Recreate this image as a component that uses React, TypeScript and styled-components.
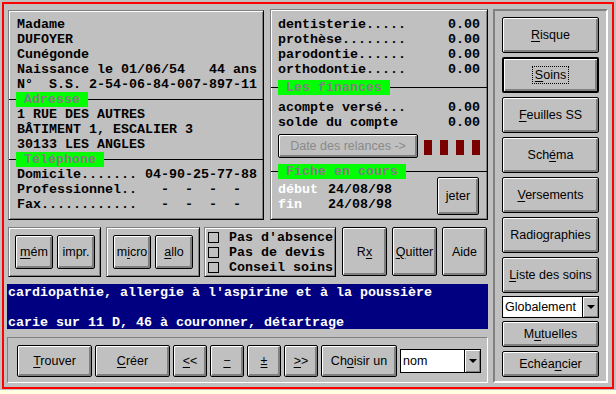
import React from 'react';
import styled, { createGlobalStyle, css } from 'styled-components';

const Global = createGlobalStyle`
  html, body { margin: 0; padding: 0; background: #ffffe1; }
  * { box-sizing: border-box; }
`;

const GRAY = '#c0c0c0';
const MONO = `"Liberation Mono", "DejaVu Sans Mono", monospace`;
const SANS = `"Liberation Sans", Arial, sans-serif`;

const raised = css`
  border: 1px solid;
  border-color: #808080 #000 #000 #808080;
  box-shadow: inset 1px 1px 0 #fff, inset -1px -1px 0 #808080;
`;

const Window = styled.div`
  width: 616px;
  height: 390px;
  background: ${GRAY};
  padding: 2px 2px 1px 2px;
`;

const Frame = styled.div`
  height: 100%;
  border: 2px solid #ff0000;
  display: flex;
  align-items: flex-start;
  padding: 5px 0 0 3px;
  gap: 5px;
`;

const LeftCol = styled.div`
  width: 481px;
  display: flex;
  flex-direction: column;
`;

const TopRow = styled.div`
  display: flex;
  height: 211px;
  align-items: flex-start;
`;

const PatientPanel = styled.div`
  ${raised};
  width: 256px;
  height: 210px;
  margin: 1px 0 0 1px;
  padding: 6px 8px 0 8px;
`;

const FinancePanel = styled.div`
  ${raised};
  width: 218px;
  height: 211px;
  margin-left: 6px;
  padding: 7px 7px 0 7px;
  display: flex;
  flex-direction: column;
`;

const Line = styled.div<{ $light?: boolean }>`
  font-family: ${MONO};
  font-weight: bold;
  font-size: 13.33px;
  line-height: 15px;
  height: 15px;
  white-space: pre;
  color: #000;
`;

const FinRow = styled(Line)`
  display: flex;
  justify-content: space-between;
`;

const LabelRow = styled.div<{ $pad: number; $mt?: number; $mb?: number }>`
  display: flex;
  align-items: center;
  height: 15px;
  margin: ${(p) => p.$mt ?? 0}px -${(p) => p.$pad}px ${(p) => p.$mb ?? 0}px;
`;

const Rule = styled.div<{ $w?: number }>`
  height: 1px;
  background: #000;
  ${(p) => (p.$w !== undefined ? `width: ${p.$w}px;` : 'flex: 1;')}
`;

const Tag = styled.span`
  background: #00ff00;
  color: #808080;
  font-family: ${MONO};
  font-weight: bold;
  font-size: 13.33px;
  line-height: 15px;
  white-space: pre;
`;

const Btn = styled.button<{ $w: number; $h: number; $default?: boolean; $disabled?: boolean }>`
  width: ${(p) => p.$w}px;
  height: ${(p) => p.$h}px;
  flex: none;
  padding: 0;
  margin: 0;
  background: ${GRAY};
  border: ${(p) => (p.$default ? 2 : 1)}px solid #000;
  border-radius: 2px;
  box-shadow: inset 1px 1px 0 #fff, inset -2px -2px 0 #808080;
  font-family: ${SANS};
  font-size: 12.5px;
  color: ${(p) => (p.$disabled ? '#8a8a8a' : '#000')};
  display: flex;
  align-items: center;
  justify-content: center;
  white-space: nowrap;
  cursor: default;
  u { text-decoration: underline; text-underline-offset: 2px; }
`;

const Focus = styled.span`
  outline: 1px dotted #000;
  outline-offset: 1px;
  padding: 0 1px;
`;

const RelanceRow = styled.div`
  display: flex;
  align-items: center;
  margin-top: 4px;
  height: 24px;
`;

const Squares = styled.div`
  display: flex;
  gap: 8px;
  margin-left: 6px;
  margin-top: 3px;
`;

const Square = styled.div`
  width: 8px;
  height: 15px;
  background: #7a0000;
`;

const FicheRow = styled.div`
  display: flex;
  justify-content: space-between;
  align-items: flex-start;
`;

const Dates = styled.div`
  padding-top: 3px;
`;

const DateLabel = styled.span`
  display: inline-block;
  width: 50px;
  color: #fff;
`;

const MidRow = styled.div`
  display: flex;
  align-items: flex-start;
  margin-top: 7px;
  height: 50px;
`;

const Group = styled.div<{ $w: number; $ml: number }>`
  ${raised};
  width: ${(p) => p.$w}px;
  height: 50px;
  margin-left: ${(p) => p.$ml}px;
  display: flex;
  align-items: center;
  gap: 4px;
  padding-left: 6px;
`;

const CheckGroup = styled.div`
  ${raised};
  width: 132px;
  height: 50px;
  margin-left: 4px;
  display: flex;
  flex-direction: column;
  justify-content: center;
  padding-left: 3px;
`;

const CheckLine = styled(Line)`
  display: flex;
  align-items: center;
  gap: 10px;
`;

const Box = styled.span`
  width: 11px;
  height: 11px;
  border: 1px solid #000;
  background: ${GRAY};
  flex: none;
`;

const Spacer = styled.div<{ $w: number }>`
  width: ${(p) => p.$w}px;
  flex: none;
`;

const Memo = styled.div`
  margin-top: 7px;
  height: 45px;
  background: #000080;
  color: #fff;
  padding: 1px 0 0 1px;
  font-family: ${MONO};
  font-weight: bold;
  font-size: 13.33px;
  line-height: 15px;
  white-space: pre;
`;

const Toolbar = styled.div`
  margin-top: 8px;
  height: 46px;
  border: 1px solid;
  border-color: #808080 #fff #fff #808080;
  display: flex;
  align-items: center;
  padding: 1px 0 0 9px;
  gap: 3px;
`;

const Combo = styled.div<{ $w: number; $h: number; $mt?: number }>`
  width: ${(p) => p.$w}px;
  height: ${(p) => p.$h}px;
  margin-top: ${(p) => p.$mt ?? 0}px;
  border: 1px solid #000;
  background: #fff;
  display: flex;
  flex: none;
`;

const ComboText = styled.div`
  flex: 1;
  font-family: ${SANS};
  font-size: 12.5px;
  color: #000;
  display: flex;
  align-items: center;
  padding-left: 2px;
`;

const ComboBtn = styled.div`
  width: 16px;
  background: ${GRAY};
  border-left: 1px solid #000;
  box-shadow: inset 1px 1px 0 #fff, inset -1px -1px 0 #808080;
  display: flex;
  align-items: center;
  justify-content: center;
  &::after {
    content: '';
    width: 0;
    height: 0;
    border-left: 4px solid transparent;
    border-right: 4px solid transparent;
    border-top: 4px solid #000;
  }
`;

const RightCol = styled.div`
  width: 115px;
  height: 374px;
  border: 2px solid;
  border-color: #808080 #fff #fff #808080;
  padding: 6px 0 0 7px;
  display: flex;
  flex-direction: column;
`;

const RightSlot = styled.div<{ $mt: number }>`
  margin-top: ${(p) => p.$mt}px;
`;

export default function App() {
  return (
    <>
      <Global />
      <Window>
        <Frame>
          <LeftCol>
            <TopRow>
              <PatientPanel>
                <Line>Madame</Line>
                <Line>DUFOYER</Line>
                <Line>Cunégonde</Line>
                <Line>{'Naissance le 01/06/54   44 ans'}</Line>
                <Line>{'N°  S.S. 2-54-06-84-007-897-11'}</Line>
                <LabelRow $pad={8}>
                  <Rule $w={7} />
                  <Tag>{' Adresse '}</Tag>
                  <Rule />
                </LabelRow>
                <Line>1 RUE DES AUTRES</Line>
                <Line>BÂTIMENT 1, ESCALIER 3</Line>
                <Line>30133 LES ANGLES</Line>
                <LabelRow $pad={8}>
                  <Rule $w={7} />
                  <Tag>{' Téléphone '}</Tag>
                  <Rule />
                </LabelRow>
                <Line>{'Domicile....... 04-90-25-77-88'}</Line>
                <Line>{'Professionnel..   -  -  -  -'}</Line>
                <Line>{'Fax............   -  -  -  -'}</Line>
              </PatientPanel>
              <FinancePanel>
                <FinRow><span>dentisterie.....</span><span>0.00</span></FinRow>
                <FinRow><span>prothèse........</span><span>0.00</span></FinRow>
                <FinRow><span>parodontie......</span><span>0.00</span></FinRow>
                <FinRow><span>orthodontie.....</span><span>0.00</span></FinRow>
                <LabelRow $pad={7} $mt={3} $mb={5}>
                  <Rule $w={7} />
                  <Tag>{' Les finances '}</Tag>
                  <Rule />
                </LabelRow>
                <FinRow><span>acompte versé...</span><span>0.00</span></FinRow>
                <FinRow><span>solde du compte</span><span>0.00</span></FinRow>
                <RelanceRow>
                  <Btn $w={140} $h={24} $disabled>Date des relances -&gt;</Btn>
                  <Squares>
                    <Square />
                    <Square />
                    <Square />
                    <Square />
                  </Squares>
                </RelanceRow>
                <LabelRow $pad={7} $mt={6}>
                  <Rule $w={7} />
                  <Tag>{' Fiche en cours '}</Tag>
                  <Rule />
                </LabelRow>
                <FicheRow>
                  <Dates>
                    <Line><DateLabel>début</DateLabel>24/08/98</Line>
                    <Line><DateLabel>fin</DateLabel>24/08/98</Line>
                  </Dates>
                  <Btn $w={42} $h={38} style={{ marginTop: -2, marginRight: 1 }}>jeter</Btn>
                </FicheRow>
              </FinancePanel>
            </TopRow>

            <MidRow>
              <Group $w={93} $ml={1}>
                <Btn $w={38} $h={34}><span><u>m</u>ém</span></Btn>
                <Btn $w={38} $h={34}>impr.</Btn>
              </Group>
              <Group $w={94} $ml={5}>
                <Btn $w={38} $h={34}><span>m<u>i</u>cro</span></Btn>
                <Btn $w={38} $h={34}><span><u>a</u>llo</span></Btn>
              </Group>
              <CheckGroup>
                <CheckLine><Box />Pas d'absence</CheckLine>
                <CheckLine><Box />Pas de devis</CheckLine>
                <CheckLine><Box />Conseil soins</CheckLine>
              </CheckGroup>
              <Spacer $w={6} />
              <Btn $w={45} $h={49}><span>R<u>x</u></span></Btn>
              <Spacer $w={5} />
              <Btn $w={45} $h={49}><span><u>Q</u>uitter</span></Btn>
              <Spacer $w={5} />
              <Btn $w={45} $h={49}>Aide</Btn>
            </MidRow>

            <Memo>
              {"cardiopathie, allergie à l'aspirine et à la poussière\n\ncarie sur 11 D, 46 à couronner, détartrage"}
            </Memo>

            <Toolbar>
              <Btn $w={75} $h={32}><span><u>T</u>rouver</span></Btn>
              <Btn $w={75} $h={32}><span><u>C</u>réer</span></Btn>
              <Btn $w={34} $h={32}><span><u>&lt;</u>&lt;</span></Btn>
              <Btn $w={34} $h={32}><u>−</u></Btn>
              <Btn $w={34} $h={32}><u>±</u></Btn>
              <Btn $w={34} $h={32}><span><u>&gt;</u>&gt;</span></Btn>
              <Btn $w={76} $h={32}><span>Ch<u>o</u>isir un</span></Btn>
              <Combo $w={81} $h={24}>
                <ComboText>nom</ComboText>
                <ComboBtn />
              </Combo>
            </Toolbar>
          </LeftCol>

          <RightCol>
            <Btn $w={97} $h={36}><span><u>R</u>isque</span></Btn>
            <RightSlot $mt={4}>
              <Btn $w={97} $h={36} $default><Focus><u>S</u>oins</Focus></Btn>
            </RightSlot>
            <RightSlot $mt={4}>
              <Btn $w={97} $h={36}><span><u>F</u>euilles SS</span></Btn>
            </RightSlot>
            <RightSlot $mt={4}>
              <Btn $w={97} $h={36}><span>Sch<u>é</u>ma</span></Btn>
            </RightSlot>
            <RightSlot $mt={4}>
              <Btn $w={97} $h={36}><span><u>V</u>ersements</span></Btn>
            </RightSlot>
            <RightSlot $mt={4}>
              <Btn $w={97} $h={36}><span>Radio<u>g</u>raphies</span></Btn>
            </RightSlot>
            <RightSlot $mt={4}>
              <Btn $w={97} $h={36}><span><u>L</u>iste des soins</span></Btn>
            </RightSlot>
            <Combo $w={97} $h={22} $mt={3}>
              <ComboText>Globalement</ComboText>
              <ComboBtn />
            </Combo>
            <RightSlot $mt={3}>
              <Btn $w={97} $h={26}><span>M<u>u</u>tuelles</span></Btn>
            </RightSlot>
            <RightSlot $mt={4}>
              <Btn $w={97} $h={26}><span>Echéa<u>n</u>cier</span></Btn>
            </RightSlot>
          </RightCol>
        </Frame>
      </Window>
    </>
  );
}
